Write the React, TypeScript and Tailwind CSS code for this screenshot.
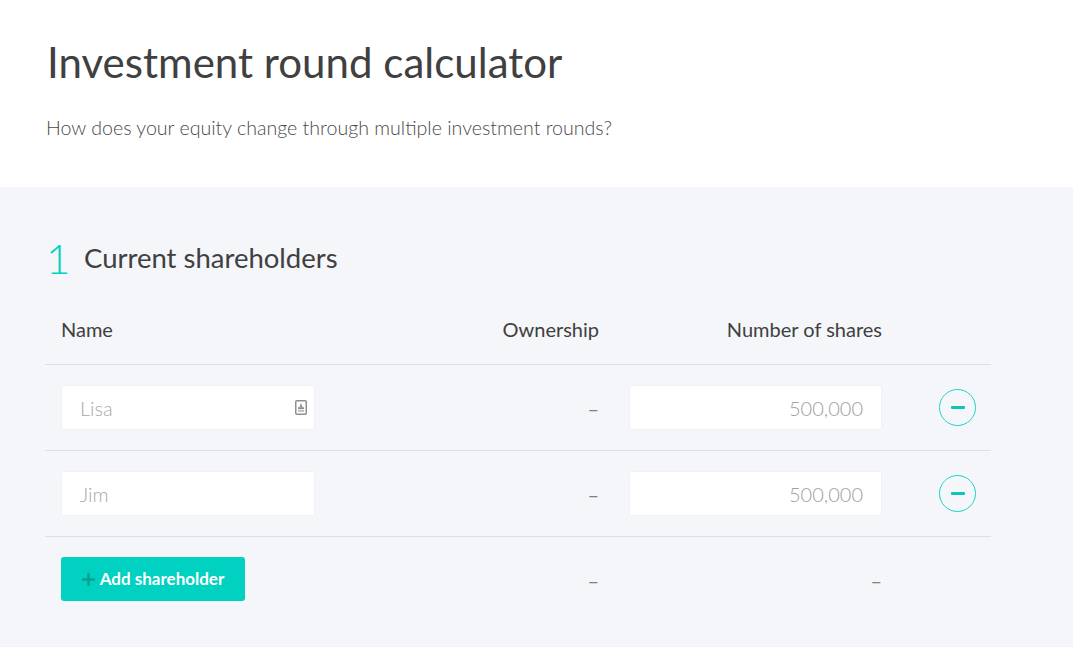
import { Plus } from "lucide-react";

const GRID = "grid grid-cols-[254px_284px_283px_1fr] items-center pl-4";

function NameInput({ placeholder, icon }: { placeholder: string; icon?: boolean }) {
  return (
    <div className="relative flex h-[45px] w-[254px] items-center rounded-[3px] border border-[#f0f1f4] bg-white pl-[18px] text-[20px] font-light text-[#a8a8a8]">
      {placeholder}
      {icon ? (
        <svg className="absolute right-[7px] top-[14px]" width="12" height="15" viewBox="0 0 12 15" fill="none">
          <rect x="0.75" y="0.75" width="10.5" height="13.5" rx="1" stroke="#8f8f8f" strokeWidth="1.5" />
          <path d="M6 3 L7.5 7 H4.5 Z" fill="#8f8f8f" />
          <rect x="3" y="7.2" width="6" height="2" fill="#8f8f8f" />
          <rect x="3" y="10.2" width="6" height="1.6" fill="#b5b5b5" />
        </svg>
      ) : null}
    </div>
  );
}

function Row({ name, icon }: { name: string; icon?: boolean }) {
  return (
    <div className={`${GRID} h-[86px] border-b border-[#dedfe0]`}>
      <NameInput placeholder={name} icon={icon} />
      <div className="text-right text-[20px] font-normal text-[#808080]">–</div>
      <div className="ml-[30px] flex h-[45px] w-[253px] items-center justify-end rounded-[3px] border border-[#f0f1f4] bg-white pr-[18px] text-[20px] font-light text-[#a0a0a0]">
        500,000
      </div>
      <button
        type="button"
        className="ml-[57px] flex h-[37px] w-[37px] items-center justify-center rounded-full border border-[#1fd4c5]"
      >
        <span className="h-[3px] w-[14px] rounded-[1px] bg-[#0fc4b5]" />
      </button>
    </div>
  );
}

export default function App() {
  return (
    <div className="h-[647px] overflow-hidden bg-[#f4f6fa] font-['Lato',sans-serif] text-[#404040]">
      <header className="h-[187px] bg-white pl-[47px] pt-[35px]">
        <h1 className="text-[42px] leading-[54px] font-normal tracking-[0.02px]">Investment round calculator</h1>
        <p className="mt-[25px] -ml-px text-[19.6px] leading-[28px] font-light text-[#4a4a4a]">
          How does your equity change through multiple investment rounds?
        </p>
      </header>

      <section className="w-[991px] pl-[45px] pt-[47px]">
        <div className="flex items-center">
          <span className="w-[39px] pl-[1px] text-[42px] leading-[48px] font-light text-[#00d1c1]">1</span>
          <h2 className="text-[27.5px] leading-[48px] font-normal">Current shareholders</h2>
        </div>
        <div className={`${GRID} mt-[27px] h-[56px] border-b border-[#dedfe0] pb-[16px] text-[20px] font-normal`}>
          <div>Name</div>
          <div className="text-right">Ownership</div>
          <div className="text-right">Number of shares</div>
        </div>
        <Row name="Lisa" icon />
        <Row name="Jim" />
        <div className={`${GRID} h-[86px]`}>
          <button
            type="button"
            className="-mt-[2px] flex h-[44px] w-[184px] items-center justify-center rounded-[3px] bg-[#00d1c1] text-[17px] font-bold text-white"
          >
            <Plus className="mr-[2px] -ml-[3px] h-[19px] w-[19px] text-[#0a9e92]" strokeWidth={3} />
            Add shareholder
          </button>
          <div className="text-right text-[20px] font-normal text-[#808080]">–</div>
          <div className="text-right text-[20px] font-normal text-[#808080]">–</div>
        </div>
      </section>
    </div>
  );
}
